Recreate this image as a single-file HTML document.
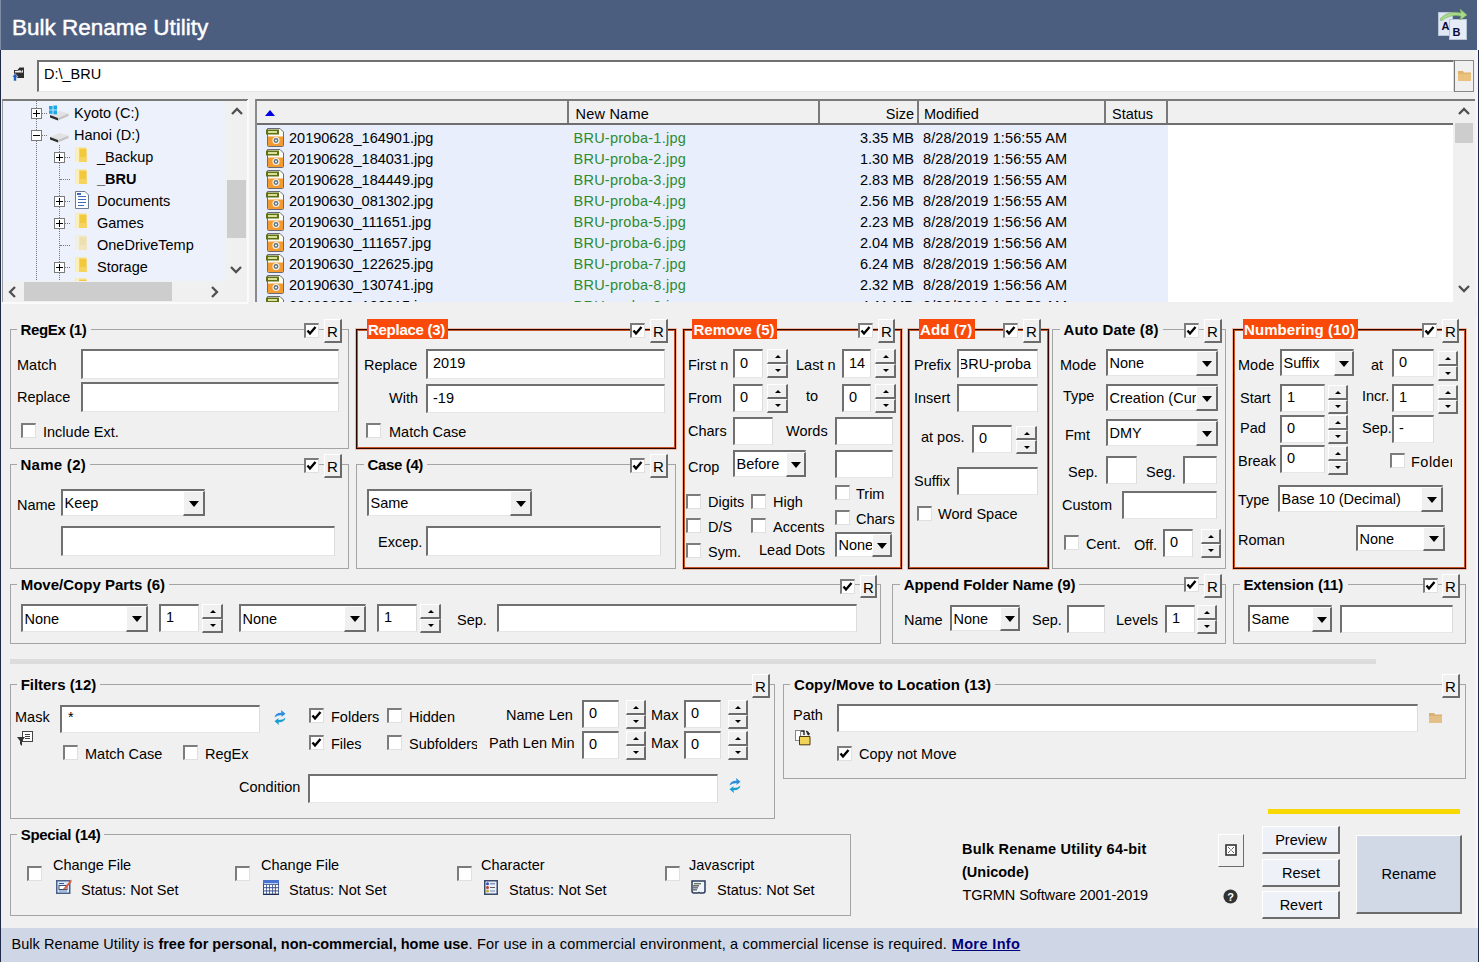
<!DOCTYPE html><html><head><meta charset="utf-8"><style>
html,body{margin:0;padding:0;}
body{width:1479px;height:962px;overflow:hidden;position:relative;background:#f0f0f0;font-family:"Liberation Sans",sans-serif;font-size:14.5px;color:#000;}
.a{position:absolute;box-sizing:border-box;}
.t{position:absolute;white-space:nowrap;line-height:1;}
.ed{position:absolute;box-sizing:border-box;background:#fff;border-top:2px solid #707070;border-left:2px solid #707070;border-right:1px solid #dcdcdc;border-bottom:1px solid #e6e6e6;}
.rb{position:absolute;box-sizing:border-box;background:#f0f0f0;border-top:1px solid #fff;border-left:1px solid #fff;border-right:2px solid #6c6c6c;border-bottom:2px solid #6c6c6c;}
.ck{position:absolute;box-sizing:border-box;background:#fff;border-top:2px solid #7c7c7c;border-left:2px solid #7c7c7c;border-right:1px solid #e0e0e0;border-bottom:1px solid #e0e0e0;}
.gb{position:absolute;box-sizing:border-box;border:1px solid #a4a4a4;}
.og{position:absolute;box-sizing:border-box;border:1px solid #2a0600;box-shadow:inset 0 0 0 1px #c85528, 0 0 0 1px #f2b8a0;}
</style></head><body>

<div class="a" style="left:0px;top:0px;width:1477px;height:50px;background:#4c5e80;"></div>
<div class="a" style="left:0px;top:50px;width:1px;height:912px;background:#1e2a48;"></div>
<div class="a" style="left:0px;top:0px;width:1px;height:50px;background:#7d8ba3;"></div>
<div class="a" style="left:1477px;top:0px;width:2px;height:962px;background:#fafafa;"></div>
<div class="a" style="left:1475px;top:50px;width:3px;height:912px;background:#f4f4f4;"></div>
<div class="a" style="left:1478px;top:50px;width:1px;height:912px;background:#1e2a48;"></div>
<div class="t" style="left:12px;top:16.7px;font-size:22.5px;color:#fff;-webkit-text-stroke:0.45px #fff;">Bulk Rename Utility</div>
<svg class="a" style="left:1436px;top:8px" width="34" height="34" viewBox="0 0 34 34">
<rect x="2.5" y="4.5" width="14" height="23" fill="#dfe7f4" stroke="#b8c4d8"/>
<rect x="13.5" y="11.5" width="17" height="20" fill="#e6ecf7" stroke="#b8c4d8"/>
<path d="M4 11 Q12 2 25 5 L24 1 L31 7 L24 12 L25 8 Q14 6 5 13Z" fill="#a8d888" stroke="#7ab060" stroke-width="0.6"/>
<text x="5.5" y="22" font-family="Liberation Sans" font-weight="bold" font-size="11" fill="#0a0a3a">A</text>
<text x="16.5" y="28" font-family="Liberation Sans" font-weight="bold" font-size="11" fill="#0a0a3a">B</text>
</svg>
<svg class="a" style="left:12px;top:66px" width="16" height="16" viewBox="0 0 16 16">
<path d="M2 4 L5.5 4 L7.5 1.5 L12 1.5 L12 12 L2 12Z" fill="#2e2e2e"/><path d="M3 5 L11 4 L11 6.5 L3 6.5Z" fill="#f4f4f4"/><circle cx="9.5" cy="4.8" r="0.8" fill="#222"/>
<path d="M0 11 L3 7.5 L6 11 L4.5 11 L4.5 15 L1.5 15 L1.5 11Z" fill="#1a5ec4" stroke="#f0f0f0" stroke-width="0.6"/></svg>
<div class="ed" style="left:37px;top:60px;width:1417px;height:32px;"></div>
<div class="t" style="left:44px;top:66.5px;">D:\_BRU</div>
<div class="a" style="left:1454px;top:60px;width:20px;height:32px;background:#f0f0f0;border:1px solid #888;border-left:1px solid #777;"></div>
<svg class="a" style="left:1457px;top:69px" width="15" height="13" viewBox="0 0 15 13"><path d="M1 2 L6 2 L7 3.5 L14 3.5 L14 12 L1 12Z" fill="#e2b46a"/><rect x="1" y="5" width="13" height="7" fill="#eac27e"/></svg>
<div class="a" style="left:2px;top:99px;width:246px;height:204px;background:#ecf1fb;border-top:2px solid #7a7a7a;border-left:1px solid #9a9a9a;"></div>
<div class="a" style="left:36px;top:101px;width:1px;height:181px;border-left:1px dotted #777;"></div>
<div class="a" style="left:59px;top:145px;width:1px;height:137px;border-left:1px dotted #777;"></div>
<div class="a" style="left:37px;top:113px;width:10px;height:1px;border-top:1px dotted #777;"></div>
<div class="a" style="left:37px;top:135px;width:10px;height:1px;border-top:1px dotted #777;"></div>
<div class="a" style="left:60px;top:157px;width:10px;height:1px;border-top:1px dotted #777;"></div>
<div class="a" style="left:60px;top:179px;width:10px;height:1px;border-top:1px dotted #777;"></div>
<div class="a" style="left:60px;top:201px;width:10px;height:1px;border-top:1px dotted #777;"></div>
<div class="a" style="left:60px;top:223px;width:10px;height:1px;border-top:1px dotted #777;"></div>
<div class="a" style="left:60px;top:245px;width:10px;height:1px;border-top:1px dotted #777;"></div>
<div class="a" style="left:60px;top:267px;width:10px;height:1px;border-top:1px dotted #777;"></div>
<div class="a" style="left:31px;top:108px;width:11px;height:11px;background:#fff;border:1px solid #7b7b7b;"></div>
<div class="a" style="left:33px;top:113px;width:7px;height:1px;background:#000;"></div>
<div class="a" style="left:36px;top:110px;width:1px;height:7px;background:#000;"></div>
<div class="a" style="left:31px;top:130px;width:11px;height:11px;background:#fff;border:1px solid #7b7b7b;"></div>
<div class="a" style="left:33px;top:135px;width:7px;height:1px;background:#000;"></div>
<div class="a" style="left:54px;top:152px;width:11px;height:11px;background:#fff;border:1px solid #7b7b7b;"></div>
<div class="a" style="left:56px;top:157px;width:7px;height:1px;background:#000;"></div>
<div class="a" style="left:59px;top:154px;width:1px;height:7px;background:#000;"></div>
<div class="a" style="left:54px;top:196px;width:11px;height:11px;background:#fff;border:1px solid #7b7b7b;"></div>
<div class="a" style="left:56px;top:201px;width:7px;height:1px;background:#000;"></div>
<div class="a" style="left:59px;top:198px;width:1px;height:7px;background:#000;"></div>
<div class="a" style="left:54px;top:218px;width:11px;height:11px;background:#fff;border:1px solid #7b7b7b;"></div>
<div class="a" style="left:56px;top:223px;width:7px;height:1px;background:#000;"></div>
<div class="a" style="left:59px;top:220px;width:1px;height:7px;background:#000;"></div>
<div class="a" style="left:54px;top:262px;width:11px;height:11px;background:#fff;border:1px solid #7b7b7b;"></div>
<div class="a" style="left:56px;top:267px;width:7px;height:1px;background:#000;"></div>
<div class="a" style="left:59px;top:264px;width:1px;height:7px;background:#000;"></div>
<svg class="a" style="left:49px;top:105px" width="20" height="17" viewBox="0 0 20 17"><path d="M1 10 L11 6 L19.5 8.5 L9 13Z" fill="#e2e2e2"/><path d="M9 13 L19.5 8.5 L19.5 11 L9 15.5Z" fill="#c4c4c4"/><path d="M1 10 L9 13 L9 15.5 L1 12.5Z" fill="#2e2e2e"/><rect x="0" y="1" width="3.6" height="3.6" fill="#1aa8e6"/><rect x="4.4" y="0.5" width="3.6" height="4.1" fill="#1aa8e6"/><rect x="0" y="5.4" width="3.6" height="3.4" fill="#1aa8e6"/><rect x="4.4" y="5.4" width="3.6" height="3.9" fill="#1aa8e6"/></svg>
<svg class="a" style="left:49px;top:127px" width="20" height="17" viewBox="0 0 20 17"><path d="M1 10 L11 6 L19.5 8.5 L9 13Z" fill="#e2e2e2"/><path d="M9 13 L19.5 8.5 L19.5 11 L9 15.5Z" fill="#c4c4c4"/><path d="M1 10 L9 13 L9 15.5 L1 12.5Z" fill="#2e2e2e"/></svg>
<div class="t" style="left:74px;top:105.5px;">Kyoto (C:)</div>
<div class="t" style="left:74px;top:127.5px;">Hanoi (D:)</div>
<svg class="a" style="left:75px;top:147px;opacity:1" width="13" height="16" viewBox="0 0 13 16"><path d="M0.5 0.5 L11.5 0.5 L11.5 15 L0.5 15Z" fill="#f8dc78"/><path d="M0.5 0.5 L4 0.5 L4 15 L0.5 15Z" fill="#fcefb8"/><path d="M4.5 2 L11.5 2 L11.5 15 L4.5 15Z" fill="#f2c93c"/><path d="M4.5 10 L11.5 10 L11.5 15 L4.5 15Z" fill="#f6d460"/></svg>
<div class="t" style="left:97px;top:149.5px;">_Backup</div>
<svg class="a" style="left:75px;top:169px;opacity:1" width="13" height="16" viewBox="0 0 13 16"><path d="M0.5 0.5 L11.5 0.5 L11.5 15 L0.5 15Z" fill="#f8dc78"/><path d="M0.5 0.5 L4 0.5 L4 15 L0.5 15Z" fill="#fcefb8"/><path d="M4.5 2 L11.5 2 L11.5 15 L4.5 15Z" fill="#f2c93c"/><path d="M4.5 10 L11.5 10 L11.5 15 L4.5 15Z" fill="#f6d460"/></svg>
<div class="t" style="left:97px;top:171.5px;font-weight:bold;">_BRU</div>
<svg class="a" style="left:75px;top:191px" width="14" height="18" viewBox="0 0 14 18"><path d="M0.5 0.5 L10 0.5 L13.5 4 L13.5 17.5 L0.5 17.5Z" fill="#fff" stroke="#6a7c94"/><rect x="3" y="5" width="8" height="1" fill="#3a6fb8"/><rect x="3" y="8" width="8" height="1" fill="#3a6fb8"/><rect x="3" y="11" width="8" height="1" fill="#3a6fb8"/><rect x="3" y="14" width="6" height="1" fill="#3a6fb8"/><rect x="2" y="2" width="4" height="2" fill="#3a6fb8"/></svg>
<div class="t" style="left:97px;top:193.5px;">Documents</div>
<svg class="a" style="left:75px;top:213px;opacity:1" width="13" height="16" viewBox="0 0 13 16"><path d="M0.5 0.5 L11.5 0.5 L11.5 15 L0.5 15Z" fill="#f8dc78"/><path d="M0.5 0.5 L4 0.5 L4 15 L0.5 15Z" fill="#fcefb8"/><path d="M4.5 2 L11.5 2 L11.5 15 L4.5 15Z" fill="#f2c93c"/><path d="M4.5 10 L11.5 10 L11.5 15 L4.5 15Z" fill="#f6d460"/></svg>
<div class="t" style="left:97px;top:215.5px;">Games</div>
<svg class="a" style="left:75px;top:235px;opacity:0.4" width="13" height="16" viewBox="0 0 13 16"><path d="M0.5 0.5 L11.5 0.5 L11.5 15 L0.5 15Z" fill="#f8dc78"/><path d="M0.5 0.5 L4 0.5 L4 15 L0.5 15Z" fill="#fcefb8"/><path d="M4.5 2 L11.5 2 L11.5 15 L4.5 15Z" fill="#f2c93c"/><path d="M4.5 10 L11.5 10 L11.5 15 L4.5 15Z" fill="#f6d460"/></svg>
<div class="t" style="left:97px;top:237.5px;">OneDriveTemp</div>
<svg class="a" style="left:75px;top:257px;opacity:1" width="13" height="16" viewBox="0 0 13 16"><path d="M0.5 0.5 L11.5 0.5 L11.5 15 L0.5 15Z" fill="#f8dc78"/><path d="M0.5 0.5 L4 0.5 L4 15 L0.5 15Z" fill="#fcefb8"/><path d="M4.5 2 L11.5 2 L11.5 15 L4.5 15Z" fill="#f2c93c"/><path d="M4.5 10 L11.5 10 L11.5 15 L4.5 15Z" fill="#f6d460"/></svg>
<div class="t" style="left:97px;top:259.5px;">Storage</div>
<svg class="a" style="left:75px;top:278px;opacity:1" width="13" height="16" viewBox="0 0 13 16"><path d="M0.5 0.5 L11.5 0.5 L11.5 15 L0.5 15Z" fill="#f8dc78"/><path d="M0.5 0.5 L4 0.5 L4 15 L0.5 15Z" fill="#fcefb8"/><path d="M4.5 2 L11.5 2 L11.5 15 L4.5 15Z" fill="#f2c93c"/><path d="M4.5 10 L11.5 10 L11.5 15 L4.5 15Z" fill="#f6d460"/></svg>
<div class="a" style="left:225px;top:101px;width:23px;height:181px;background:#f0f0f0;"></div>
<div class="a" style="left:227px;top:180px;width:19px;height:58px;background:#cdcdcd;"></div>
<svg class="a" style="left:231px;top:106px" width="12" height="10" viewBox="0 0 12 10"><path d="M1 8 L6 3 L11 8" stroke="#505050" stroke-width="2.3" fill="none"/></svg>
<svg class="a" style="left:230px;top:265px" width="12" height="10" viewBox="0 0 12 10"><path d="M1 2 L6 7 L11 2" stroke="#505050" stroke-width="2.3" fill="none"/></svg>
<div class="a" style="left:3px;top:281px;width:245px;height:22px;background:#f0f0f0;"></div>
<div class="a" style="left:24px;top:282px;width:148px;height:19px;background:#cdcdcd;"></div>
<svg class="a" style="left:7px;top:286px" width="10" height="12" viewBox="0 0 10 12"><path d="M8 1 L3 6 L8 11" stroke="#505050" stroke-width="2.3" fill="none"/></svg>
<svg class="a" style="left:210px;top:286px" width="10" height="12" viewBox="0 0 10 12"><path d="M2 1 L7 6 L2 11" stroke="#505050" stroke-width="2.3" fill="none"/></svg>
<div class="a" style="left:2px;top:302px;width:247px;height:2px;background:#fbfbfb;"></div>
<div class="a" style="left:247px;top:100px;width:2px;height:204px;background:#fbfbfb;"></div>
<div class="a" style="left:255px;top:99px;width:1220px;height:204px;background:#fff;border-top:2px solid #7a7a7a;border-left:2px solid #8a8a8a;"></div>
<div class="a" style="left:257px;top:101px;width:1196px;height:24px;background:#f0f0f0;border-bottom:2px solid #6e6e6e;"></div>
<div class="a" style="left:567px;top:101px;width:2px;height:22px;background:#7a7a7a;"></div>
<div class="a" style="left:818px;top:101px;width:2px;height:22px;background:#7a7a7a;"></div>
<div class="a" style="left:917px;top:101px;width:2px;height:22px;background:#7a7a7a;"></div>
<div class="a" style="left:1104px;top:101px;width:2px;height:22px;background:#7a7a7a;"></div>
<div class="a" style="left:1166px;top:101px;width:2px;height:22px;background:#7a7a7a;"></div>
<div class="a" style="left:264.5px;top:110.0px;width:0;height:0;border-left:5.5px solid transparent;border-right:5.5px solid transparent;border-bottom:6px solid #0000e0;"></div>
<div class="t" style="left:575.5px;top:106.5px;letter-spacing:0.223px;">New Name</div>
<div class="t" style="left:514px;width:400px;text-align:right;top:106.5px;">Size</div>
<div class="t" style="left:924px;top:106.5px;">Modified</div>
<div class="t" style="left:1112px;top:106.5px;">Status</div>
<div class="a" style="left:257px;top:125px;width:911px;height:178px;background:#e8eefc;"></div>
<svg class="a" style="left:265px;top:127px" width="20" height="20" viewBox="0 0 20 20"><path d="M2.5 1.5 L15 1.5 L18.5 5 L18.5 18.5 Q18.5 19.5 17.5 19.5 L3.5 19.5 Q2.5 19.5 2.5 18.5Z" fill="#fbfbf4" stroke="#6a6a78" stroke-width="1"/><path d="M3 9.5 L18 9.5 L18 19 L3 19Z" fill="#f39a30"/><rect x="1" y="2.5" width="13" height="5" fill="#5f7016"/><rect x="3" y="4" width="9" height="2" fill="#d8e098"/><circle cx="11" cy="13.5" r="3.6" fill="#f8f4ec"/><circle cx="11" cy="13.5" r="2.4" fill="#60707c"/><circle cx="11" cy="13.5" r="1.1" fill="#e8f8f8"/></svg>
<div class="t" style="left:289px;top:130.5px;">20190628_164901.jpg</div>
<div class="t" style="left:573.5px;top:130.5px;color:#2e8b2e;letter-spacing:0.247px;">BRU-proba-1.jpg</div>
<div class="t" style="left:514px;width:400px;text-align:right;top:130.5px;">3.35 MB</div>
<div class="t" style="left:923px;top:130.5px;letter-spacing:0.115px;">8/28/2019 1:56:55 AM</div>
<svg class="a" style="left:265px;top:148px" width="20" height="20" viewBox="0 0 20 20"><path d="M2.5 1.5 L15 1.5 L18.5 5 L18.5 18.5 Q18.5 19.5 17.5 19.5 L3.5 19.5 Q2.5 19.5 2.5 18.5Z" fill="#fbfbf4" stroke="#6a6a78" stroke-width="1"/><path d="M3 9.5 L18 9.5 L18 19 L3 19Z" fill="#f39a30"/><rect x="1" y="2.5" width="13" height="5" fill="#5f7016"/><rect x="3" y="4" width="9" height="2" fill="#d8e098"/><circle cx="11" cy="13.5" r="3.6" fill="#f8f4ec"/><circle cx="11" cy="13.5" r="2.4" fill="#60707c"/><circle cx="11" cy="13.5" r="1.1" fill="#e8f8f8"/></svg>
<div class="t" style="left:289px;top:151.5px;">20190628_184031.jpg</div>
<div class="t" style="left:573.5px;top:151.5px;color:#2e8b2e;letter-spacing:0.247px;">BRU-proba-2.jpg</div>
<div class="t" style="left:514px;width:400px;text-align:right;top:151.5px;">1.30 MB</div>
<div class="t" style="left:923px;top:151.5px;letter-spacing:0.115px;">8/28/2019 1:56:55 AM</div>
<svg class="a" style="left:265px;top:169px" width="20" height="20" viewBox="0 0 20 20"><path d="M2.5 1.5 L15 1.5 L18.5 5 L18.5 18.5 Q18.5 19.5 17.5 19.5 L3.5 19.5 Q2.5 19.5 2.5 18.5Z" fill="#fbfbf4" stroke="#6a6a78" stroke-width="1"/><path d="M3 9.5 L18 9.5 L18 19 L3 19Z" fill="#f39a30"/><rect x="1" y="2.5" width="13" height="5" fill="#5f7016"/><rect x="3" y="4" width="9" height="2" fill="#d8e098"/><circle cx="11" cy="13.5" r="3.6" fill="#f8f4ec"/><circle cx="11" cy="13.5" r="2.4" fill="#60707c"/><circle cx="11" cy="13.5" r="1.1" fill="#e8f8f8"/></svg>
<div class="t" style="left:289px;top:172.5px;">20190628_184449.jpg</div>
<div class="t" style="left:573.5px;top:172.5px;color:#2e8b2e;letter-spacing:0.247px;">BRU-proba-3.jpg</div>
<div class="t" style="left:514px;width:400px;text-align:right;top:172.5px;">2.83 MB</div>
<div class="t" style="left:923px;top:172.5px;letter-spacing:0.115px;">8/28/2019 1:56:55 AM</div>
<svg class="a" style="left:265px;top:190px" width="20" height="20" viewBox="0 0 20 20"><path d="M2.5 1.5 L15 1.5 L18.5 5 L18.5 18.5 Q18.5 19.5 17.5 19.5 L3.5 19.5 Q2.5 19.5 2.5 18.5Z" fill="#fbfbf4" stroke="#6a6a78" stroke-width="1"/><path d="M3 9.5 L18 9.5 L18 19 L3 19Z" fill="#f39a30"/><rect x="1" y="2.5" width="13" height="5" fill="#5f7016"/><rect x="3" y="4" width="9" height="2" fill="#d8e098"/><circle cx="11" cy="13.5" r="3.6" fill="#f8f4ec"/><circle cx="11" cy="13.5" r="2.4" fill="#60707c"/><circle cx="11" cy="13.5" r="1.1" fill="#e8f8f8"/></svg>
<div class="t" style="left:289px;top:193.5px;">20190630_081302.jpg</div>
<div class="t" style="left:573.5px;top:193.5px;color:#2e8b2e;letter-spacing:0.247px;">BRU-proba-4.jpg</div>
<div class="t" style="left:514px;width:400px;text-align:right;top:193.5px;">2.56 MB</div>
<div class="t" style="left:923px;top:193.5px;letter-spacing:0.115px;">8/28/2019 1:56:55 AM</div>
<svg class="a" style="left:265px;top:211px" width="20" height="20" viewBox="0 0 20 20"><path d="M2.5 1.5 L15 1.5 L18.5 5 L18.5 18.5 Q18.5 19.5 17.5 19.5 L3.5 19.5 Q2.5 19.5 2.5 18.5Z" fill="#fbfbf4" stroke="#6a6a78" stroke-width="1"/><path d="M3 9.5 L18 9.5 L18 19 L3 19Z" fill="#f39a30"/><rect x="1" y="2.5" width="13" height="5" fill="#5f7016"/><rect x="3" y="4" width="9" height="2" fill="#d8e098"/><circle cx="11" cy="13.5" r="3.6" fill="#f8f4ec"/><circle cx="11" cy="13.5" r="2.4" fill="#60707c"/><circle cx="11" cy="13.5" r="1.1" fill="#e8f8f8"/></svg>
<div class="t" style="left:289px;top:214.5px;">20190630_111651.jpg</div>
<div class="t" style="left:573.5px;top:214.5px;color:#2e8b2e;letter-spacing:0.247px;">BRU-proba-5.jpg</div>
<div class="t" style="left:514px;width:400px;text-align:right;top:214.5px;">2.23 MB</div>
<div class="t" style="left:923px;top:214.5px;letter-spacing:0.115px;">8/28/2019 1:56:56 AM</div>
<svg class="a" style="left:265px;top:232px" width="20" height="20" viewBox="0 0 20 20"><path d="M2.5 1.5 L15 1.5 L18.5 5 L18.5 18.5 Q18.5 19.5 17.5 19.5 L3.5 19.5 Q2.5 19.5 2.5 18.5Z" fill="#fbfbf4" stroke="#6a6a78" stroke-width="1"/><path d="M3 9.5 L18 9.5 L18 19 L3 19Z" fill="#f39a30"/><rect x="1" y="2.5" width="13" height="5" fill="#5f7016"/><rect x="3" y="4" width="9" height="2" fill="#d8e098"/><circle cx="11" cy="13.5" r="3.6" fill="#f8f4ec"/><circle cx="11" cy="13.5" r="2.4" fill="#60707c"/><circle cx="11" cy="13.5" r="1.1" fill="#e8f8f8"/></svg>
<div class="t" style="left:289px;top:235.5px;">20190630_111657.jpg</div>
<div class="t" style="left:573.5px;top:235.5px;color:#2e8b2e;letter-spacing:0.247px;">BRU-proba-6.jpg</div>
<div class="t" style="left:514px;width:400px;text-align:right;top:235.5px;">2.04 MB</div>
<div class="t" style="left:923px;top:235.5px;letter-spacing:0.115px;">8/28/2019 1:56:56 AM</div>
<svg class="a" style="left:265px;top:253px" width="20" height="20" viewBox="0 0 20 20"><path d="M2.5 1.5 L15 1.5 L18.5 5 L18.5 18.5 Q18.5 19.5 17.5 19.5 L3.5 19.5 Q2.5 19.5 2.5 18.5Z" fill="#fbfbf4" stroke="#6a6a78" stroke-width="1"/><path d="M3 9.5 L18 9.5 L18 19 L3 19Z" fill="#f39a30"/><rect x="1" y="2.5" width="13" height="5" fill="#5f7016"/><rect x="3" y="4" width="9" height="2" fill="#d8e098"/><circle cx="11" cy="13.5" r="3.6" fill="#f8f4ec"/><circle cx="11" cy="13.5" r="2.4" fill="#60707c"/><circle cx="11" cy="13.5" r="1.1" fill="#e8f8f8"/></svg>
<div class="t" style="left:289px;top:256.5px;">20190630_122625.jpg</div>
<div class="t" style="left:573.5px;top:256.5px;color:#2e8b2e;letter-spacing:0.247px;">BRU-proba-7.jpg</div>
<div class="t" style="left:514px;width:400px;text-align:right;top:256.5px;">6.24 MB</div>
<div class="t" style="left:923px;top:256.5px;letter-spacing:0.115px;">8/28/2019 1:56:56 AM</div>
<svg class="a" style="left:265px;top:274px" width="20" height="20" viewBox="0 0 20 20"><path d="M2.5 1.5 L15 1.5 L18.5 5 L18.5 18.5 Q18.5 19.5 17.5 19.5 L3.5 19.5 Q2.5 19.5 2.5 18.5Z" fill="#fbfbf4" stroke="#6a6a78" stroke-width="1"/><path d="M3 9.5 L18 9.5 L18 19 L3 19Z" fill="#f39a30"/><rect x="1" y="2.5" width="13" height="5" fill="#5f7016"/><rect x="3" y="4" width="9" height="2" fill="#d8e098"/><circle cx="11" cy="13.5" r="3.6" fill="#f8f4ec"/><circle cx="11" cy="13.5" r="2.4" fill="#60707c"/><circle cx="11" cy="13.5" r="1.1" fill="#e8f8f8"/></svg>
<div class="t" style="left:289px;top:277.5px;">20190630_130741.jpg</div>
<div class="t" style="left:573.5px;top:277.5px;color:#2e8b2e;letter-spacing:0.247px;">BRU-proba-8.jpg</div>
<div class="t" style="left:514px;width:400px;text-align:right;top:277.5px;">2.32 MB</div>
<div class="t" style="left:923px;top:277.5px;letter-spacing:0.115px;">8/28/2019 1:56:56 AM</div>
<svg class="a" style="left:265px;top:295px" width="20" height="20" viewBox="0 0 20 20"><path d="M2.5 1.5 L15 1.5 L18.5 5 L18.5 18.5 Q18.5 19.5 17.5 19.5 L3.5 19.5 Q2.5 19.5 2.5 18.5Z" fill="#fbfbf4" stroke="#6a6a78" stroke-width="1"/><path d="M3 9.5 L18 9.5 L18 19 L3 19Z" fill="#f39a30"/><rect x="1" y="2.5" width="13" height="5" fill="#5f7016"/><rect x="3" y="4" width="9" height="2" fill="#d8e098"/><circle cx="11" cy="13.5" r="3.6" fill="#f8f4ec"/><circle cx="11" cy="13.5" r="2.4" fill="#60707c"/><circle cx="11" cy="13.5" r="1.1" fill="#e8f8f8"/></svg>
<div class="t" style="left:289px;top:298.5px;">20190630_130915.jpg</div>
<div class="t" style="left:573.5px;top:298.5px;color:#2e8b2e;letter-spacing:0.247px;">BRU-proba-9.jpg</div>
<div class="t" style="left:514px;width:400px;text-align:right;top:298.5px;">4.11 MB</div>
<div class="t" style="left:923px;top:298.5px;letter-spacing:0.115px;">8/28/2019 1:56:56 AM</div>
<div class="a" style="left:248px;top:302px;width:1229px;height:16px;background:#f0f0f0;"></div>
<div class="a" style="left:1453px;top:101px;width:22px;height:201px;background:#f0f0f0;"></div>
<div class="a" style="left:1455px;top:123px;width:18px;height:20px;background:#cdcdcd;"></div>
<svg class="a" style="left:1458px;top:106px" width="12" height="10" viewBox="0 0 12 10"><path d="M1 8 L6 3 L11 8" stroke="#505050" stroke-width="2.3" fill="none"/></svg>
<svg class="a" style="left:1458px;top:284px" width="12" height="10" viewBox="0 0 12 10"><path d="M1 2 L6 7 L11 2" stroke="#505050" stroke-width="2.3" fill="none"/></svg>
<div class="gb" style="left:10px;top:329px;width:339px;height:120px;"></div>
<div class="a" style="left:16.5px;top:319px;width:74.0px;height:19px;background:#f0f0f0;"></div>
<div class="t" style="left:20.5px;top:322.3px;font-size:15px;font-weight:bold;letter-spacing:-0.354px;">RegEx (1)</div>
<div class="ck" style="left:304px;top:323px;width:15px;height:15px;"></div>
<svg class="a" style="left:304px;top:323px" width="15" height="15" viewBox="0 0 15 15"><path d="M3.5 7.5 L6 10.5 L11.5 4" stroke="#000" stroke-width="2.4" fill="none"/></svg>
<div class="rb" style="left:324px;top:319px;width:18px;height:24px;"></div>
<div class="t" style="left:327px;top:324.3px;font-size:15px;">R</div>
<div class="t" style="left:17px;top:357.5px;">Match</div>
<div class="ed" style="left:81px;top:349px;width:258px;height:30px;"></div>
<div class="t" style="left:17px;top:389.5px;">Replace</div>
<div class="ed" style="left:81px;top:382px;width:258px;height:30px;"></div>
<div class="ck" style="left:21px;top:423px;width:15px;height:15px;"></div>
<div class="t" style="left:43px;top:424.5px;">Include Ext.</div>
<div class="gb" style="left:10px;top:464px;width:339px;height:105px;"></div>
<div class="a" style="left:16.5px;top:454px;width:73.5px;height:19px;background:#f0f0f0;"></div>
<div class="t" style="left:20.5px;top:457.3px;font-size:15px;font-weight:bold;letter-spacing:0.268px;">Name (2)</div>
<div class="ck" style="left:304px;top:458px;width:15px;height:15px;"></div>
<svg class="a" style="left:304px;top:458px" width="15" height="15" viewBox="0 0 15 15"><path d="M3.5 7.5 L6 10.5 L11.5 4" stroke="#000" stroke-width="2.4" fill="none"/></svg>
<div class="rb" style="left:324px;top:454px;width:18px;height:24px;"></div>
<div class="t" style="left:327px;top:459.3px;font-size:15px;">R</div>
<div class="t" style="left:17px;top:497.5px;">Name</div>
<div class="ed" style="left:61px;top:489px;width:144px;height:27px;"></div>
<div class="t" style="left:64.5px;top:496.3px;">Keep</div>
<div class="rb" style="left:183px;top:491px;width:22px;height:25px;"></div>
<div class="a" style="left:189.0px;top:500.5px;width:0;height:0;border-left:5.0px solid transparent;border-right:5.0px solid transparent;border-top:6px solid #000;"></div>
<div class="ed" style="left:61px;top:526px;width:274px;height:30px;"></div>
<div class="og" style="left:356px;top:329px;width:320px;height:120px;"></div>
<div class="a" style="left:366.5px;top:319px;width:81.0px;height:19.5px;background:#fa4a0a;"></div>
<div class="t" style="left:368px;top:322.3px;font-size:15px;font-weight:bold;color:#fff;letter-spacing:-0.276px;">Replace (3)</div>
<div class="ck" style="left:630px;top:323px;width:15px;height:15px;"></div>
<svg class="a" style="left:630px;top:323px" width="15" height="15" viewBox="0 0 15 15"><path d="M3.5 7.5 L6 10.5 L11.5 4" stroke="#000" stroke-width="2.4" fill="none"/></svg>
<div class="rb" style="left:650px;top:319px;width:18px;height:24px;"></div>
<div class="t" style="left:653px;top:324.3px;font-size:15px;">R</div>
<div class="t" style="left:364px;top:357.5px;">Replace</div>
<div class="ed" style="left:426px;top:349px;width:239px;height:30px;"></div>
<div class="t" style="left:433px;top:356.3px;">2019</div>
<div class="t" style="left:389px;top:390.5px;">With</div>
<div class="ed" style="left:426px;top:384px;width:239px;height:29px;"></div>
<div class="t" style="left:433px;top:390.8px;">-19</div>
<div class="ck" style="left:366px;top:423px;width:15px;height:15px;"></div>
<div class="t" style="left:389px;top:424.5px;">Match Case</div>
<div class="gb" style="left:356px;top:464px;width:320px;height:105px;"></div>
<div class="a" style="left:363.5px;top:454px;width:63.5px;height:19px;background:#f0f0f0;"></div>
<div class="t" style="left:367.5px;top:457.3px;font-size:15px;font-weight:bold;letter-spacing:-0.357px;">Case (4)</div>
<div class="ck" style="left:630px;top:458px;width:15px;height:15px;"></div>
<svg class="a" style="left:630px;top:458px" width="15" height="15" viewBox="0 0 15 15"><path d="M3.5 7.5 L6 10.5 L11.5 4" stroke="#000" stroke-width="2.4" fill="none"/></svg>
<div class="rb" style="left:650px;top:454px;width:18px;height:24px;"></div>
<div class="t" style="left:653px;top:459.3px;font-size:15px;">R</div>
<div class="ed" style="left:367px;top:489px;width:165px;height:27px;"></div>
<div class="t" style="left:370.5px;top:496.3px;">Same</div>
<div class="rb" style="left:510px;top:491px;width:22px;height:25px;"></div>
<div class="a" style="left:516.0px;top:500.5px;width:0;height:0;border-left:5.0px solid transparent;border-right:5.0px solid transparent;border-top:6px solid #000;"></div>
<div class="t" style="left:378px;top:534.5px;">Excep.</div>
<div class="ed" style="left:426px;top:526px;width:235px;height:30px;"></div>
<div class="og" style="left:683px;top:329px;width:219px;height:240px;"></div>
<div class="a" style="left:692.0px;top:319px;width:85.0px;height:19.5px;background:#fa4a0a;"></div>
<div class="t" style="left:693.5px;top:322.3px;font-size:15px;font-weight:bold;color:#fff;letter-spacing:0.014px;">Remove (5)</div>
<div class="ck" style="left:858px;top:323px;width:15px;height:15px;"></div>
<svg class="a" style="left:858px;top:323px" width="15" height="15" viewBox="0 0 15 15"><path d="M3.5 7.5 L6 10.5 L11.5 4" stroke="#000" stroke-width="2.4" fill="none"/></svg>
<div class="rb" style="left:878px;top:319px;width:17px;height:24px;"></div>
<div class="t" style="left:881px;top:324.3px;font-size:15px;">R</div>
<div class="t" style="left:688px;top:357.5px;">First n</div>
<div class="ed" style="left:733px;top:349px;width:30px;height:29px;"></div>
<div class="t" style="left:740px;top:355.8px;">0</div>
<div class="rb" style="left:767px;top:349px;width:21px;height:14.5px;"></div>
<div class="rb" style="left:767px;top:363.5px;width:21px;height:14.5px;"></div>
<div class="a" style="left:774.5px;top:354.75px;width:0;height:0;border-left:3.0px solid transparent;border-right:3.0px solid transparent;border-bottom:3px solid #000;"></div>
<div class="a" style="left:774.5px;top:369.25px;width:0;height:0;border-left:3.0px solid transparent;border-right:3.0px solid transparent;border-top:3px solid #000;"></div>
<div class="t" style="left:796px;top:357.5px;">Last n</div>
<div class="ed" style="left:842px;top:349px;width:29px;height:29px;"></div>
<div class="t" style="left:849px;top:355.8px;">14</div>
<div class="rb" style="left:875px;top:349px;width:21px;height:14.5px;"></div>
<div class="rb" style="left:875px;top:363.5px;width:21px;height:14.5px;"></div>
<div class="a" style="left:882.5px;top:354.75px;width:0;height:0;border-left:3.0px solid transparent;border-right:3.0px solid transparent;border-bottom:3px solid #000;"></div>
<div class="a" style="left:882.5px;top:369.25px;width:0;height:0;border-left:3.0px solid transparent;border-right:3.0px solid transparent;border-top:3px solid #000;"></div>
<div class="t" style="left:688px;top:390.5px;">From</div>
<div class="ed" style="left:733px;top:384px;width:30px;height:28px;"></div>
<div class="t" style="left:740px;top:390.3px;">0</div>
<div class="rb" style="left:767px;top:384px;width:21px;height:14.5px;"></div>
<div class="rb" style="left:767px;top:398.5px;width:21px;height:14.5px;"></div>
<div class="a" style="left:774.5px;top:389.75px;width:0;height:0;border-left:3.0px solid transparent;border-right:3.0px solid transparent;border-bottom:3px solid #000;"></div>
<div class="a" style="left:774.5px;top:404.25px;width:0;height:0;border-left:3.0px solid transparent;border-right:3.0px solid transparent;border-top:3px solid #000;"></div>
<div class="t" style="left:806px;top:388.5px;">to</div>
<div class="ed" style="left:842px;top:384px;width:29px;height:28px;"></div>
<div class="t" style="left:849px;top:390.3px;">0</div>
<div class="rb" style="left:875px;top:384px;width:21px;height:14.5px;"></div>
<div class="rb" style="left:875px;top:398.5px;width:21px;height:14.5px;"></div>
<div class="a" style="left:882.5px;top:389.75px;width:0;height:0;border-left:3.0px solid transparent;border-right:3.0px solid transparent;border-bottom:3px solid #000;"></div>
<div class="a" style="left:882.5px;top:404.25px;width:0;height:0;border-left:3.0px solid transparent;border-right:3.0px solid transparent;border-top:3px solid #000;"></div>
<div class="t" style="left:688px;top:423.5px;">Chars</div>
<div class="ed" style="left:733px;top:417px;width:40px;height:28px;"></div>
<div class="t" style="left:786px;top:423.5px;">Words</div>
<div class="ed" style="left:835px;top:417px;width:58px;height:28px;"></div>
<div class="t" style="left:688px;top:459.5px;">Crop</div>
<div class="ed" style="left:733px;top:450px;width:73px;height:27px;"></div>
<div class="t" style="left:736.5px;top:457.3px;">Before</div>
<div class="rb" style="left:786px;top:452px;width:20px;height:25px;"></div>
<div class="a" style="left:791.0px;top:461.5px;width:0;height:0;border-left:5.0px solid transparent;border-right:5.0px solid transparent;border-top:6px solid #000;"></div>
<div class="ed" style="left:835px;top:450px;width:58px;height:28px;"></div>
<div class="ck" style="left:686px;top:494px;width:15px;height:15px;"></div>
<div class="t" style="left:708px;top:494.5px;">Digits</div>
<div class="ck" style="left:751px;top:494px;width:15px;height:15px;"></div>
<div class="t" style="left:773px;top:494.5px;">High</div>
<div class="ck" style="left:835px;top:485px;width:15px;height:15px;"></div>
<div class="t" style="left:856px;top:486.5px;">Trim</div>
<div class="ck" style="left:686px;top:518px;width:15px;height:15px;"></div>
<div class="t" style="left:708px;top:519.5px;">D/S</div>
<div class="ck" style="left:751px;top:518px;width:15px;height:15px;"></div>
<div class="t" style="left:773px;top:519.5px;">Accents</div>
<div class="ck" style="left:835px;top:510px;width:15px;height:15px;"></div>
<div class="t" style="left:856px;top:511.5px;">Chars</div>
<div class="ck" style="left:686px;top:543px;width:15px;height:15px;"></div>
<div class="t" style="left:708px;top:544.5px;">Sym.</div>
<div class="t" style="left:759px;top:542.5px;">Lead Dots</div>
<div class="ed" style="left:835px;top:532px;width:57px;height:25px;"></div>
<div class="t" style="left:838.5px;top:538.3px;">None</div>
<div class="rb" style="left:872px;top:534px;width:20px;height:23px;"></div>
<div class="a" style="left:877.0px;top:542.5px;width:0;height:0;border-left:5.0px solid transparent;border-right:5.0px solid transparent;border-top:6px solid #000;"></div>
<div class="og" style="left:908px;top:329px;width:141px;height:240px;"></div>
<div class="a" style="left:918.5px;top:319px;width:56.299999999999955px;height:19.5px;background:#fa4a0a;"></div>
<div class="t" style="left:920px;top:322.3px;font-size:15px;font-weight:bold;color:#fff;letter-spacing:0.092px;">Add (7)</div>
<div class="ck" style="left:1003px;top:323px;width:15px;height:15px;"></div>
<svg class="a" style="left:1003px;top:323px" width="15" height="15" viewBox="0 0 15 15"><path d="M3.5 7.5 L6 10.5 L11.5 4" stroke="#000" stroke-width="2.4" fill="none"/></svg>
<div class="rb" style="left:1023px;top:319px;width:18px;height:24px;"></div>
<div class="t" style="left:1026px;top:324.3px;font-size:15px;">R</div>
<div class="t" style="left:914px;top:357.5px;">Prefix</div>
<div class="ed" style="left:957px;top:349px;width:81px;height:29px;"></div>
<div class="a" style="left:961px;top:352px;width:75px;height:24px;overflow:hidden;">
<div class="t" style="left:-2.5px;top:4.8px;">BRU-proba</div>
</div>
<div class="t" style="left:914px;top:390.5px;">Insert</div>
<div class="ed" style="left:957px;top:384px;width:81px;height:28px;"></div>
<div class="t" style="left:921px;top:429.5px;">at pos.</div>
<div class="ed" style="left:972px;top:425px;width:40px;height:28px;"></div>
<div class="t" style="left:979px;top:431.3px;">0</div>
<div class="rb" style="left:1016px;top:426px;width:21px;height:14.0px;"></div>
<div class="rb" style="left:1016px;top:440.0px;width:21px;height:14.0px;"></div>
<div class="a" style="left:1023.5px;top:431.5px;width:0;height:0;border-left:3.0px solid transparent;border-right:3.0px solid transparent;border-bottom:3px solid #000;"></div>
<div class="a" style="left:1023.5px;top:445.5px;width:0;height:0;border-left:3.0px solid transparent;border-right:3.0px solid transparent;border-top:3px solid #000;"></div>
<div class="t" style="left:914px;top:473.5px;">Suffix</div>
<div class="ed" style="left:957px;top:467px;width:81px;height:28px;"></div>
<div class="ck" style="left:917px;top:506px;width:15px;height:15px;"></div>
<div class="t" style="left:938px;top:506.5px;">Word Space</div>
<div class="gb" style="left:1052px;top:329px;width:174px;height:240px;"></div>
<div class="a" style="left:1059.6px;top:319px;width:103.0px;height:19px;background:#f0f0f0;"></div>
<div class="t" style="left:1063.6px;top:322.3px;font-size:15px;font-weight:bold;letter-spacing:0.128px;">Auto Date (8)</div>
<div class="ck" style="left:1184px;top:323px;width:15px;height:15px;"></div>
<svg class="a" style="left:1184px;top:323px" width="15" height="15" viewBox="0 0 15 15"><path d="M3.5 7.5 L6 10.5 L11.5 4" stroke="#000" stroke-width="2.4" fill="none"/></svg>
<div class="rb" style="left:1204px;top:319px;width:18px;height:24px;"></div>
<div class="t" style="left:1207px;top:324.3px;font-size:15px;">R</div>
<div class="t" style="left:1060px;top:357.5px;">Mode</div>
<div class="ed" style="left:1106px;top:349px;width:112px;height:27px;"></div>
<div class="t" style="left:1109.5px;top:356.3px;">None</div>
<div class="rb" style="left:1196px;top:351px;width:22px;height:25px;"></div>
<div class="a" style="left:1202.0px;top:360.5px;width:0;height:0;border-left:5.0px solid transparent;border-right:5.0px solid transparent;border-top:6px solid #000;"></div>
<div class="t" style="left:1063px;top:388.5px;">Type</div>
<div class="ed" style="left:1106px;top:384px;width:112px;height:27px;"></div>
<div class="t" style="left:1109.5px;top:391.3px;">Creation (Cur</div>
<div class="rb" style="left:1196px;top:386px;width:22px;height:25px;"></div>
<div class="a" style="left:1202.0px;top:395.5px;width:0;height:0;border-left:5.0px solid transparent;border-right:5.0px solid transparent;border-top:6px solid #000;"></div>
<div class="t" style="left:1065px;top:427.5px;">Fmt</div>
<div class="ed" style="left:1106px;top:419px;width:112px;height:27px;"></div>
<div class="t" style="left:1109.5px;top:426.3px;">DMY</div>
<div class="rb" style="left:1196px;top:421px;width:22px;height:25px;"></div>
<div class="a" style="left:1202.0px;top:430.5px;width:0;height:0;border-left:5.0px solid transparent;border-right:5.0px solid transparent;border-top:6px solid #000;"></div>
<div class="t" style="left:1068px;top:464.5px;">Sep.</div>
<div class="ed" style="left:1106px;top:456px;width:31px;height:28px;"></div>
<div class="t" style="left:1146px;top:464.5px;">Seg.</div>
<div class="ed" style="left:1183px;top:456px;width:34px;height:28px;"></div>
<div class="t" style="left:1062px;top:497.5px;">Custom</div>
<div class="ed" style="left:1122px;top:491px;width:95px;height:28px;"></div>
<div class="ck" style="left:1064px;top:535px;width:15px;height:15px;"></div>
<div class="t" style="left:1086px;top:536.5px;">Cent.</div>
<div class="t" style="left:1134px;top:537.5px;">Off.</div>
<div class="ed" style="left:1163px;top:529px;width:30px;height:28px;"></div>
<div class="t" style="left:1170px;top:535.3px;">0</div>
<div class="rb" style="left:1201px;top:529px;width:20px;height:14.5px;"></div>
<div class="rb" style="left:1201px;top:543.5px;width:20px;height:14.5px;"></div>
<div class="a" style="left:1208.0px;top:534.75px;width:0;height:0;border-left:3.0px solid transparent;border-right:3.0px solid transparent;border-bottom:3px solid #000;"></div>
<div class="a" style="left:1208.0px;top:549.25px;width:0;height:0;border-left:3.0px solid transparent;border-right:3.0px solid transparent;border-top:3px solid #000;"></div>
<div class="og" style="left:1233px;top:329px;width:233px;height:240px;"></div>
<div class="a" style="left:1242.5px;top:319px;width:115.0px;height:19.5px;background:#fa4a0a;"></div>
<div class="t" style="left:1244px;top:322.3px;font-size:15px;font-weight:bold;color:#fff;letter-spacing:0.071px;">Numbering (10)</div>
<div class="ck" style="left:1422px;top:323px;width:15px;height:15px;"></div>
<svg class="a" style="left:1422px;top:323px" width="15" height="15" viewBox="0 0 15 15"><path d="M3.5 7.5 L6 10.5 L11.5 4" stroke="#000" stroke-width="2.4" fill="none"/></svg>
<div class="rb" style="left:1442px;top:319px;width:17px;height:24px;"></div>
<div class="t" style="left:1445px;top:324.3px;font-size:15px;">R</div>
<div class="t" style="left:1238px;top:357.5px;">Mode</div>
<div class="ed" style="left:1280px;top:349px;width:74px;height:27px;"></div>
<div class="t" style="left:1283.5px;top:356.3px;">Suffix</div>
<div class="rb" style="left:1334px;top:351px;width:20px;height:25px;"></div>
<div class="a" style="left:1339.0px;top:360.5px;width:0;height:0;border-left:5.0px solid transparent;border-right:5.0px solid transparent;border-top:6px solid #000;"></div>
<div class="t" style="left:1371px;top:357.5px;">at</div>
<div class="ed" style="left:1392px;top:349px;width:42px;height:28px;"></div>
<div class="t" style="left:1399px;top:355.3px;">0</div>
<div class="rb" style="left:1438px;top:351px;width:20px;height:15.0px;"></div>
<div class="rb" style="left:1438px;top:366.0px;width:20px;height:15.0px;"></div>
<div class="a" style="left:1445.0px;top:357.0px;width:0;height:0;border-left:3.0px solid transparent;border-right:3.0px solid transparent;border-bottom:3px solid #000;"></div>
<div class="a" style="left:1445.0px;top:372.0px;width:0;height:0;border-left:3.0px solid transparent;border-right:3.0px solid transparent;border-top:3px solid #000;"></div>
<div class="t" style="left:1240px;top:390.5px;">Start</div>
<div class="ed" style="left:1280px;top:384px;width:45px;height:28px;"></div>
<div class="t" style="left:1287px;top:390.3px;">1</div>
<div class="rb" style="left:1328px;top:385px;width:20px;height:14.5px;"></div>
<div class="rb" style="left:1328px;top:399.5px;width:20px;height:14.5px;"></div>
<div class="a" style="left:1335.0px;top:390.75px;width:0;height:0;border-left:3.0px solid transparent;border-right:3.0px solid transparent;border-bottom:3px solid #000;"></div>
<div class="a" style="left:1335.0px;top:405.25px;width:0;height:0;border-left:3.0px solid transparent;border-right:3.0px solid transparent;border-top:3px solid #000;"></div>
<div class="t" style="left:1362px;top:388.5px;">Incr.</div>
<div class="ed" style="left:1392px;top:384px;width:42px;height:28px;"></div>
<div class="t" style="left:1399px;top:390.3px;">1</div>
<div class="rb" style="left:1438px;top:385px;width:20px;height:14.5px;"></div>
<div class="rb" style="left:1438px;top:399.5px;width:20px;height:14.5px;"></div>
<div class="a" style="left:1445.0px;top:390.75px;width:0;height:0;border-left:3.0px solid transparent;border-right:3.0px solid transparent;border-bottom:3px solid #000;"></div>
<div class="a" style="left:1445.0px;top:405.25px;width:0;height:0;border-left:3.0px solid transparent;border-right:3.0px solid transparent;border-top:3px solid #000;"></div>
<div class="t" style="left:1240px;top:420.5px;">Pad</div>
<div class="ed" style="left:1280px;top:415px;width:45px;height:28px;"></div>
<div class="t" style="left:1287px;top:421.3px;">0</div>
<div class="rb" style="left:1328px;top:415px;width:20px;height:14.5px;"></div>
<div class="rb" style="left:1328px;top:429.5px;width:20px;height:14.5px;"></div>
<div class="a" style="left:1335.0px;top:420.75px;width:0;height:0;border-left:3.0px solid transparent;border-right:3.0px solid transparent;border-bottom:3px solid #000;"></div>
<div class="a" style="left:1335.0px;top:435.25px;width:0;height:0;border-left:3.0px solid transparent;border-right:3.0px solid transparent;border-top:3px solid #000;"></div>
<div class="t" style="left:1362px;top:420.5px;">Sep.</div>
<div class="ed" style="left:1392px;top:415px;width:42px;height:28px;"></div>
<div class="t" style="left:1399px;top:421.3px;">-</div>
<div class="t" style="left:1238px;top:453.5px;">Break</div>
<div class="ed" style="left:1280px;top:445px;width:45px;height:28px;"></div>
<div class="t" style="left:1287px;top:451.3px;">0</div>
<div class="rb" style="left:1328px;top:446px;width:20px;height:14.5px;"></div>
<div class="rb" style="left:1328px;top:460.5px;width:20px;height:14.5px;"></div>
<div class="a" style="left:1335.0px;top:451.75px;width:0;height:0;border-left:3.0px solid transparent;border-right:3.0px solid transparent;border-bottom:3px solid #000;"></div>
<div class="a" style="left:1335.0px;top:466.25px;width:0;height:0;border-left:3.0px solid transparent;border-right:3.0px solid transparent;border-top:3px solid #000;"></div>
<div class="ck" style="left:1390px;top:453px;width:15px;height:15px;"></div>
<div class="t" style="left:1411px;top:454.5px;width:41px;overflow:hidden;letter-spacing:0.483px;">Folder</div>
<div class="t" style="left:1238px;top:492.5px;">Type</div>
<div class="ed" style="left:1278px;top:485px;width:165px;height:27px;"></div>
<div class="t" style="left:1281.5px;top:492.3px;">Base 10 (Decimal)</div>
<div class="rb" style="left:1421px;top:487px;width:22px;height:25px;"></div>
<div class="a" style="left:1427.0px;top:496.5px;width:0;height:0;border-left:5.0px solid transparent;border-right:5.0px solid transparent;border-top:6px solid #000;"></div>
<div class="t" style="left:1238px;top:532.5px;">Roman</div>
<div class="ed" style="left:1356px;top:525px;width:89px;height:26px;"></div>
<div class="t" style="left:1359.5px;top:531.8px;">None</div>
<div class="rb" style="left:1423px;top:527px;width:22px;height:24px;"></div>
<div class="a" style="left:1429.0px;top:536.0px;width:0;height:0;border-left:5.0px solid transparent;border-right:5.0px solid transparent;border-top:6px solid #000;"></div>
<div class="gb" style="left:10px;top:584px;width:871px;height:60px;"></div>
<div class="a" style="left:16.7px;top:574px;width:152.3px;height:19px;background:#f0f0f0;"></div>
<div class="t" style="left:20.7px;top:577.3px;font-size:15px;font-weight:bold;letter-spacing:0.005px;">Move/Copy Parts (6)</div>
<div class="ck" style="left:840px;top:579px;width:15px;height:15px;"></div>
<svg class="a" style="left:840px;top:579px" width="15" height="15" viewBox="0 0 15 15"><path d="M3.5 7.5 L6 10.5 L11.5 4" stroke="#000" stroke-width="2.4" fill="none"/></svg>
<div class="rb" style="left:860px;top:575px;width:17px;height:23px;"></div>
<div class="t" style="left:863px;top:579.8px;font-size:15px;">R</div>
<div class="ed" style="left:21px;top:604px;width:127px;height:28px;"></div>
<div class="t" style="left:24.5px;top:611.8px;">None</div>
<div class="rb" style="left:126px;top:606px;width:22px;height:26px;"></div>
<div class="a" style="left:132.0px;top:616.0px;width:0;height:0;border-left:5.0px solid transparent;border-right:5.0px solid transparent;border-top:6px solid #000;"></div>
<div class="ed" style="left:159px;top:604px;width:40px;height:28px;"></div>
<div class="t" style="left:166px;top:610.3px;">1</div>
<div class="rb" style="left:202px;top:604px;width:21px;height:14.5px;"></div>
<div class="rb" style="left:202px;top:618.5px;width:21px;height:14.5px;"></div>
<div class="a" style="left:209.5px;top:609.75px;width:0;height:0;border-left:3.0px solid transparent;border-right:3.0px solid transparent;border-bottom:3px solid #000;"></div>
<div class="a" style="left:209.5px;top:624.25px;width:0;height:0;border-left:3.0px solid transparent;border-right:3.0px solid transparent;border-top:3px solid #000;"></div>
<div class="ed" style="left:239px;top:604px;width:127px;height:28px;"></div>
<div class="t" style="left:242.5px;top:611.8px;">None</div>
<div class="rb" style="left:344px;top:606px;width:22px;height:26px;"></div>
<div class="a" style="left:350.0px;top:616.0px;width:0;height:0;border-left:5.0px solid transparent;border-right:5.0px solid transparent;border-top:6px solid #000;"></div>
<div class="ed" style="left:377px;top:604px;width:40px;height:28px;"></div>
<div class="t" style="left:384px;top:610.3px;">1</div>
<div class="rb" style="left:420px;top:604px;width:21px;height:14.5px;"></div>
<div class="rb" style="left:420px;top:618.5px;width:21px;height:14.5px;"></div>
<div class="a" style="left:427.5px;top:609.75px;width:0;height:0;border-left:3.0px solid transparent;border-right:3.0px solid transparent;border-bottom:3px solid #000;"></div>
<div class="a" style="left:427.5px;top:624.25px;width:0;height:0;border-left:3.0px solid transparent;border-right:3.0px solid transparent;border-top:3px solid #000;"></div>
<div class="t" style="left:457px;top:612.5px;">Sep.</div>
<div class="ed" style="left:497px;top:604px;width:360px;height:28px;"></div>
<div class="gb" style="left:892px;top:584px;width:334px;height:60px;"></div>
<div class="a" style="left:899.8px;top:574px;width:179.5px;height:19px;background:#f0f0f0;"></div>
<div class="t" style="left:903.8px;top:577.3px;font-size:15px;font-weight:bold;letter-spacing:-0.084px;">Append Folder Name (9)</div>
<div class="ck" style="left:1184px;top:577px;width:15px;height:15px;"></div>
<svg class="a" style="left:1184px;top:577px" width="15" height="15" viewBox="0 0 15 15"><path d="M3.5 7.5 L6 10.5 L11.5 4" stroke="#000" stroke-width="2.4" fill="none"/></svg>
<div class="rb" style="left:1204px;top:574px;width:18px;height:24px;"></div>
<div class="t" style="left:1207px;top:579.3px;font-size:15px;">R</div>
<div class="t" style="left:904px;top:612.5px;">Name</div>
<div class="ed" style="left:950px;top:605px;width:70px;height:26px;"></div>
<div class="t" style="left:953.5px;top:611.8px;">None</div>
<div class="rb" style="left:1000px;top:607px;width:20px;height:24px;"></div>
<div class="a" style="left:1005.0px;top:616.0px;width:0;height:0;border-left:5.0px solid transparent;border-right:5.0px solid transparent;border-top:6px solid #000;"></div>
<div class="t" style="left:1032px;top:612.5px;">Sep.</div>
<div class="ed" style="left:1067px;top:605px;width:38px;height:28px;"></div>
<div class="t" style="left:1116px;top:612.5px;">Levels</div>
<div class="ed" style="left:1165px;top:605px;width:30px;height:28px;"></div>
<div class="t" style="left:1172px;top:611.3px;">1</div>
<div class="rb" style="left:1197px;top:605px;width:20px;height:14.5px;"></div>
<div class="rb" style="left:1197px;top:619.5px;width:20px;height:14.5px;"></div>
<div class="a" style="left:1204.0px;top:610.75px;width:0;height:0;border-left:3.0px solid transparent;border-right:3.0px solid transparent;border-bottom:3px solid #000;"></div>
<div class="a" style="left:1204.0px;top:625.25px;width:0;height:0;border-left:3.0px solid transparent;border-right:3.0px solid transparent;border-top:3px solid #000;"></div>
<div class="gb" style="left:1233px;top:584px;width:233px;height:60px;"></div>
<div class="a" style="left:1239.5px;top:574px;width:108.5px;height:19px;background:#f0f0f0;"></div>
<div class="t" style="left:1243.5px;top:577.3px;font-size:15px;font-weight:bold;letter-spacing:-0.145px;">Extension (11)</div>
<div class="ck" style="left:1423px;top:578px;width:15px;height:15px;"></div>
<svg class="a" style="left:1423px;top:578px" width="15" height="15" viewBox="0 0 15 15"><path d="M3.5 7.5 L6 10.5 L11.5 4" stroke="#000" stroke-width="2.4" fill="none"/></svg>
<div class="rb" style="left:1442px;top:574px;width:18px;height:24px;"></div>
<div class="t" style="left:1445px;top:579.3px;font-size:15px;">R</div>
<div class="ed" style="left:1248px;top:605px;width:84px;height:27px;"></div>
<div class="t" style="left:1251.5px;top:612.3px;">Same</div>
<div class="rb" style="left:1312px;top:607px;width:20px;height:25px;"></div>
<div class="a" style="left:1317.0px;top:616.5px;width:0;height:0;border-left:5.0px solid transparent;border-right:5.0px solid transparent;border-top:6px solid #000;"></div>
<div class="ed" style="left:1340px;top:605px;width:113px;height:28px;"></div>
<div class="a" style="left:10px;top:659px;width:1366px;height:5px;background:#dcdcdc;"></div>
<div class="gb" style="left:10px;top:684px;width:765px;height:135px;"></div>
<div class="a" style="left:16.7px;top:674px;width:83.5px;height:19px;background:#f0f0f0;"></div>
<div class="t" style="left:20.7px;top:677.3px;font-size:15px;font-weight:bold;letter-spacing:-0.030px;">Filters (12)</div>
<div class="rb" style="left:752px;top:674px;width:18px;height:24px;"></div>
<div class="t" style="left:755px;top:679.3px;font-size:15px;">R</div>
<div class="t" style="left:15px;top:709.5px;">Mask</div>
<div class="ed" style="left:60px;top:705px;width:200px;height:28px;"></div>
<div class="t" style="left:68px;top:709.5px;">*</div>
<svg class="a" style="left:273px;top:709px" width="14" height="17" viewBox="0 0 14 17"><path d="M1.5 8.5 Q2.5 3.5 8.5 3.8 L8 1 L12.5 4.8 L8.5 8 L8.6 6 Q4 6 1.5 8.5Z" fill="#2a8ee0"/><path d="M12.5 8.5 Q11.5 13.5 5.5 13.2 L6 16 L1.5 12.2 L5.5 9 L5.4 11 Q10 11 12.5 8.5Z" fill="#1aa0d0"/></svg>
<svg class="a" style="left:17px;top:731px" width="17" height="16" viewBox="0 0 17 16"><rect x="5.5" y="0.5" width="10" height="10" fill="#fff" stroke="#444"/><rect x="8" y="3" width="5" height="1" fill="#444"/><rect x="8" y="5" width="5" height="1" fill="#444"/><rect x="8" y="7" width="5" height="1" fill="#444"/><path d="M0 6 L8 6 L5 10 L5 15 L3 13 L3 10Z" fill="#333"/></svg>
<div class="ck" style="left:63px;top:745px;width:15px;height:15px;"></div>
<div class="t" style="left:85px;top:746.5px;">Match Case</div>
<div class="ck" style="left:183px;top:745px;width:15px;height:15px;"></div>
<div class="t" style="left:205px;top:746.5px;">RegEx</div>
<div class="ck" style="left:309px;top:708px;width:15px;height:15px;"></div>
<svg class="a" style="left:309px;top:708px" width="15" height="15" viewBox="0 0 15 15"><path d="M3.5 7.5 L6 10.5 L11.5 4" stroke="#000" stroke-width="2.4" fill="none"/></svg>
<div class="t" style="left:331px;top:709.5px;">Folders</div>
<div class="ck" style="left:387px;top:708px;width:15px;height:15px;"></div>
<div class="t" style="left:409px;top:709.5px;">Hidden</div>
<div class="ck" style="left:309px;top:735px;width:15px;height:15px;"></div>
<svg class="a" style="left:309px;top:735px" width="15" height="15" viewBox="0 0 15 15"><path d="M3.5 7.5 L6 10.5 L11.5 4" stroke="#000" stroke-width="2.4" fill="none"/></svg>
<div class="t" style="left:331px;top:736.5px;">Files</div>
<div class="ck" style="left:387px;top:735px;width:15px;height:15px;"></div>
<div class="t" style="left:409px;top:736.5px;width:68px;overflow:hidden;">Subfolders</div>
<div class="t" style="left:506px;top:707.5px;">Name Len</div>
<div class="ed" style="left:582px;top:700px;width:37px;height:28px;"></div>
<div class="t" style="left:589px;top:706.3px;">0</div>
<div class="rb" style="left:626px;top:700px;width:20px;height:14.5px;"></div>
<div class="rb" style="left:626px;top:714.5px;width:20px;height:14.5px;"></div>
<div class="a" style="left:633.0px;top:705.75px;width:0;height:0;border-left:3.0px solid transparent;border-right:3.0px solid transparent;border-bottom:3px solid #000;"></div>
<div class="a" style="left:633.0px;top:720.25px;width:0;height:0;border-left:3.0px solid transparent;border-right:3.0px solid transparent;border-top:3px solid #000;"></div>
<div class="t" style="left:651px;top:707.5px;">Max</div>
<div class="ed" style="left:684px;top:700px;width:37px;height:28px;"></div>
<div class="t" style="left:691px;top:706.3px;">0</div>
<div class="rb" style="left:728px;top:700px;width:20px;height:14.5px;"></div>
<div class="rb" style="left:728px;top:714.5px;width:20px;height:14.5px;"></div>
<div class="a" style="left:735.0px;top:705.75px;width:0;height:0;border-left:3.0px solid transparent;border-right:3.0px solid transparent;border-bottom:3px solid #000;"></div>
<div class="a" style="left:735.0px;top:720.25px;width:0;height:0;border-left:3.0px solid transparent;border-right:3.0px solid transparent;border-top:3px solid #000;"></div>
<div class="t" style="left:489px;top:735.5px;">Path Len Min</div>
<div class="ed" style="left:582px;top:731px;width:37px;height:28px;"></div>
<div class="t" style="left:589px;top:737.3px;">0</div>
<div class="rb" style="left:626px;top:731px;width:20px;height:14.5px;"></div>
<div class="rb" style="left:626px;top:745.5px;width:20px;height:14.5px;"></div>
<div class="a" style="left:633.0px;top:736.75px;width:0;height:0;border-left:3.0px solid transparent;border-right:3.0px solid transparent;border-bottom:3px solid #000;"></div>
<div class="a" style="left:633.0px;top:751.25px;width:0;height:0;border-left:3.0px solid transparent;border-right:3.0px solid transparent;border-top:3px solid #000;"></div>
<div class="t" style="left:651px;top:735.5px;">Max</div>
<div class="ed" style="left:684px;top:731px;width:37px;height:28px;"></div>
<div class="t" style="left:691px;top:737.3px;">0</div>
<div class="rb" style="left:728px;top:731px;width:20px;height:14.5px;"></div>
<div class="rb" style="left:728px;top:745.5px;width:20px;height:14.5px;"></div>
<div class="a" style="left:735.0px;top:736.75px;width:0;height:0;border-left:3.0px solid transparent;border-right:3.0px solid transparent;border-bottom:3px solid #000;"></div>
<div class="a" style="left:735.0px;top:751.25px;width:0;height:0;border-left:3.0px solid transparent;border-right:3.0px solid transparent;border-top:3px solid #000;"></div>
<div class="t" style="left:239px;top:779.5px;">Condition</div>
<div class="ed" style="left:308px;top:774px;width:410px;height:29px;"></div>
<svg class="a" style="left:728px;top:777px" width="14" height="17" viewBox="0 0 14 17"><path d="M1.5 8.5 Q2.5 3.5 8.5 3.8 L8 1 L12.5 4.8 L8.5 8 L8.6 6 Q4 6 1.5 8.5Z" fill="#2a8ee0"/><path d="M12.5 8.5 Q11.5 13.5 5.5 13.2 L6 16 L1.5 12.2 L5.5 9 L5.4 11 Q10 11 12.5 8.5Z" fill="#1aa0d0"/></svg>
<div class="gb" style="left:783px;top:684px;width:683px;height:95px;"></div>
<div class="a" style="left:790px;top:674px;width:205px;height:19px;background:#f0f0f0;"></div>
<div class="t" style="left:794px;top:677.3px;font-size:15px;font-weight:bold;letter-spacing:0.045px;">Copy/Move to Location (13)</div>
<div class="rb" style="left:1442px;top:674px;width:18px;height:24px;"></div>
<div class="t" style="left:1445px;top:679.3px;font-size:15px;">R</div>
<div class="t" style="left:793px;top:707.5px;">Path</div>
<div class="ed" style="left:837px;top:704px;width:581px;height:28px;"></div>
<svg class="a" style="left:1428px;top:712px" width="15" height="12" viewBox="0 0 15 12"><path d="M1 1 L6 1 L7 2.5 L14 2.5 L14 11 L1 11Z" fill="#d8b070"/><rect x="1" y="4" width="13" height="7" fill="#e4c088"/></svg>
<svg class="a" style="left:795px;top:730px" width="16" height="16" viewBox="0 0 16 16"><rect x="0.5" y="0.5" width="5" height="10" fill="#fff" stroke="#888"/><path d="M4.5 6.5 L15 6.5 L15 14.8 L4.5 14.8Z" fill="#f2d35a" stroke="#4a3a10"/><path d="M6 1 L9 1 L9 5 M11 1.5 Q13.5 1.5 13.5 4.5 L12 3.5 M13.5 4.5 L14.5 3.2" stroke="#222" stroke-width="1.4" fill="none"/></svg>
<div class="ck" style="left:837px;top:746px;width:15px;height:15px;"></div>
<svg class="a" style="left:837px;top:746px" width="15" height="15" viewBox="0 0 15 15"><path d="M3.5 7.5 L6 10.5 L11.5 4" stroke="#000" stroke-width="2.4" fill="none"/></svg>
<div class="t" style="left:859px;top:746.5px;">Copy not Move</div>
<div class="a" style="left:1268px;top:809px;width:192px;height:5px;background:#f7d800;"></div>
<div class="gb" style="left:10px;top:834px;width:841px;height:82px;"></div>
<div class="a" style="left:16.7px;top:824px;width:87.8px;height:19px;background:#f0f0f0;"></div>
<div class="t" style="left:20.7px;top:827.3px;font-size:15px;font-weight:bold;letter-spacing:-0.298px;">Special (14)</div>
<div class="ck" style="left:27px;top:866px;width:15px;height:15px;"></div>
<div class="t" style="left:53px;top:857.5px;">Change File</div>
<svg class="a" style="left:56px;top:879px" width="16" height="15" viewBox="0 0 16 15"><rect x="0.75" y="1.75" width="13" height="12.5" fill="#dceaf8" stroke="#4a6088" stroke-width="1.5"/><rect x="3" y="4" width="5" height="1" fill="#3a58a0"/><rect x="3" y="6.5" width="8" height="4" fill="#fff" stroke="#3a4a70"/><rect x="3" y="11.5" width="8" height="1" fill="#6a8ac0"/><path d="M7 10 L13.5 2.5 L15.5 0.5 L15.5 3 L9 10.5Z" fill="#e0583a"/></svg>
<div class="t" style="left:81px;top:882.5px;">Status: Not Set</div>
<div class="ck" style="left:235px;top:866px;width:15px;height:15px;"></div>
<div class="t" style="left:261px;top:857.5px;">Change File</div>
<svg class="a" style="left:263px;top:880px" width="16" height="15" viewBox="0 0 16 15"><rect x="0" y="0" width="16" height="15" fill="#34508a"/><rect x="0" y="0" width="16" height="3.5" fill="#4a72d0"/><rect x="1" y="3" width="14" height="1.2" fill="#b8d0f8"/><rect x="1" y="5.0" width="2.2" height="2.2" fill="#fff"/><rect x="1" y="8.2" width="2.2" height="2.2" fill="#fff"/><rect x="1" y="11.4" width="2.2" height="2.2" fill="#fff"/><rect x="4" y="5.0" width="2.2" height="2.2" fill="#fff"/><rect x="4" y="8.2" width="2.2" height="2.2" fill="#fff"/><rect x="4" y="11.4" width="2.2" height="2.2" fill="#fff"/><rect x="7" y="5.0" width="2.2" height="2.2" fill="#fff"/><rect x="7" y="8.2" width="2.2" height="2.2" fill="#fff"/><rect x="7" y="11.4" width="2.2" height="2.2" fill="#fff"/><rect x="10" y="5.0" width="2.2" height="2.2" fill="#fde8d8"/><rect x="10" y="8.2" width="2.2" height="2.2" fill="#fde8d8"/><rect x="10" y="11.4" width="2.2" height="2.2" fill="#fde8d8"/><rect x="13" y="5.0" width="2.2" height="2.2" fill="#fff"/><rect x="13" y="8.2" width="2.2" height="2.2" fill="#fff"/><rect x="13" y="11.4" width="2.2" height="2.2" fill="#fff"/><rect x="0" y="14" width="16" height="1" fill="#1a2a50"/></svg>
<div class="t" style="left:289px;top:882.5px;">Status: Not Set</div>
<div class="ck" style="left:457px;top:866px;width:15px;height:15px;"></div>
<div class="t" style="left:481px;top:857.5px;">Character</div>
<svg class="a" style="left:484px;top:880px" width="14" height="15" viewBox="0 0 14 15"><rect x="0.75" y="0.75" width="12.5" height="13.5" fill="#e6f0fa" stroke="#3a4a6a" stroke-width="1.5"/><circle cx="3.5" cy="3.8" r="1.5" fill="#3a48b8"/><circle cx="3.5" cy="7.5" r="1.5" fill="#b84030"/><circle cx="3.5" cy="11" r="1.5" fill="#c8a838"/><rect x="6" y="3.3" width="5" height="1" fill="#5a6a9a"/><rect x="6" y="7" width="5" height="1" fill="#6a5a5a"/><rect x="6" y="10.5" width="5" height="1" fill="#7a8aaa"/></svg>
<div class="t" style="left:509px;top:882.5px;">Status: Not Set</div>
<div class="ck" style="left:665px;top:866px;width:15px;height:15px;"></div>
<div class="t" style="left:689px;top:857.5px;">Javascript</div>
<svg class="a" style="left:691px;top:880px" width="15" height="14" viewBox="0 0 15 14"><path d="M1 1 L14 1 L14 11 Q14 13 12 13 L9 13 Q8 12 7 13 L3 13 Q1 13 1 11Z" fill="#eef4fb" stroke="#2a3a58" stroke-width="1.5"/><rect x="3" y="3.2" width="7" height="1.1" fill="#4a5a3a"/><rect x="2" y="5.3" width="6" height="1.1" fill="#333"/><rect x="2" y="7.3" width="5" height="1.1" fill="#444"/><rect x="2" y="9.3" width="4" height="1.1" fill="#444"/></svg>
<div class="t" style="left:717px;top:882.5px;">Status: Not Set</div>
<div class="t" style="left:962px;top:842.2px;font-weight:bold;letter-spacing:0.220px;">Bulk Rename Utility 64-bit</div>
<div class="t" style="left:962px;top:865.0px;font-weight:bold;letter-spacing:-0.006px;">(Unicode)</div>
<div class="t" style="left:962.5px;top:887.8px;letter-spacing:-0.091px;">TGRMN Software 2001-2019</div>
<div class="rb" style="left:1218px;top:834px;width:26px;height:33px;border-right:1.5px solid #6c6c6c;border-bottom:1.5px solid #6c6c6c;"></div>
<svg class="a" style="left:1225px;top:844px" width="12" height="12" viewBox="0 0 12 12"><rect x="1" y="1" width="10" height="10" fill="#fff" stroke="#333" stroke-width="1.6"/><path d="M3 3 L5.5 5.5 M9 3 L6.5 5.5 M3 9 L5.5 6.5 M9 9 L6.5 6.5" stroke="#666" stroke-width="1"/></svg>
<svg class="a" style="left:1223px;top:889px" width="15" height="15" viewBox="0 0 15 15"><circle cx="7.5" cy="7.5" r="7" fill="#333"/><text x="7.5" y="11.5" text-anchor="middle" font-family="Liberation Sans" font-weight="bold" font-size="11" fill="#fff">?</text></svg>
<div class="rb" style="left:1262px;top:826px;width:78px;height:28px;background:#eef1f7;"></div>
<div class="t" style="left:1262px;width:78px;text-align:center;top:832.5px;">Preview</div>
<div class="rb" style="left:1262px;top:859px;width:78px;height:28px;background:#eef1f7;"></div>
<div class="t" style="left:1262px;width:78px;text-align:center;top:865.5px;">Reset</div>
<div class="rb" style="left:1262px;top:891px;width:78px;height:28px;background:#eef1f7;"></div>
<div class="t" style="left:1262px;width:78px;text-align:center;top:897.5px;">Revert</div>
<div class="rb" style="left:1356px;top:835px;width:106px;height:79px;background:#d1d8e6;"></div>
<div class="t" style="left:1356px;width:106px;text-align:center;top:867.0px;">Rename</div>
<div class="a" style="left:1px;top:928px;width:1477px;height:34px;background:#cfd6e6;"></div>
<div class="t" style="left:11.4px;top:936.5px;letter-spacing:0.068px;">Bulk Rename Utility is</div>
<div class="t" style="left:158.4px;top:936.5px;font-weight:bold;letter-spacing:-0.005px;">free for personal, non-commercial, home use</div>
<div class="t" style="left:468.5px;top:936.5px;letter-spacing:0.177px;">. For use in a commercial environment, a commercial license is required.</div>
<div class="t" style="left:951.7px;top:936.5px;font-weight:bold;color:#00007a;letter-spacing:0.373px;text-decoration:underline;">More Info</div>
</body></html>
